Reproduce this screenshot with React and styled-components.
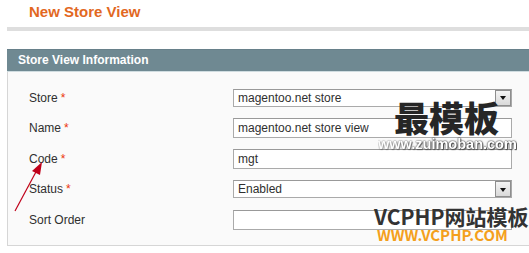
import React from 'react';
import styled, { createGlobalStyle } from 'styled-components';

const GlobalStyle = createGlobalStyle`
  body {
    margin: 0;
    overflow: hidden;
    background: #fff;
    font-family: "Liberation Sans", Arial, sans-serif;
  }
`;

const Page = styled.div`
  position: relative;
  width: 529px;
  height: 253px;
  padding-left: 7px;
  box-sizing: border-box;
  overflow: hidden;
`;

const ContentHeader = styled.div`
  width: 560px;
  padding: 3px 0 6px 22px;
  box-sizing: border-box;
  border-bottom: 4px solid #dedede;
`;

const Title = styled.h3`
  margin: 0;
  font-size: 15px;
  line-height: 18px;
  font-weight: bold;
  color: #e2681f;
`;

const Fieldset = styled.div`
  width: 560px;
  margin-top: 18px;
`;

const SectionHead = styled.h4`
  margin: 0;
  height: 23px;
  padding-left: 11px;
  background: #6f8992;
  border-top: 1px solid #67808a;
  border-bottom: 1px solid #cfdce0;
  box-sizing: border-box;
  color: #fff;
  font-size: 12px;
  font-weight: bold;
  line-height: 20px;
`;

const SectionBody = styled.div`
  background: #fafafa;
  border-left: 1px solid #d6d6d6;
  border-bottom: 1px solid #d6d6d6;
  padding: 10.5px 0 10px 21px;
`;

const Form = styled.div`
  display: grid;
  grid-template-columns: 204px 279px;
  grid-auto-rows: 30.5px;
  align-items: center;
`;

const Label = styled.label`
  font-size: 12px;
  color: #2f2f2f;
`;

const Required = styled.span`
  color: #eb340a;
  margin-left: 3px;
`;

const TextInput = styled.input`
  height: 20px;
  width: 100%;
  box-sizing: border-box;
  margin: 0;
  border: 1px solid #aaa;
  border-top-color: #999;
  padding: 0 4px;
  background: #fff;
  font: 12px "Liberation Sans", Arial, sans-serif;
  color: #2f2f2f;
  outline: none;
`;

const SelectBox = styled.div`
  display: flex;
  height: 18px;
  box-sizing: border-box;
  border: 1px solid #aaa;
  border-top-color: #999;
  background: #fff;
`;

const NativeSelect = styled.select`
  flex: 1;
  appearance: none;
  border: none;
  margin: 0;
  padding: 0 0 0 4px;
  background: transparent;
  font: 12px "Liberation Sans", Arial, sans-serif;
  color: #2f2f2f;
  outline: none;
`;

const ArrowButton = styled.span`
  width: 16px;
  height: 16px;
  box-sizing: border-box;
  border: 1px solid #8e8e8e;
  background: linear-gradient(#f4f4f4, #d9d9d9);
  display: flex;
  align-items: center;
  justify-content: center;
`;

const Triangle = styled.span`
  width: 0;
  height: 0;
  border-left: 3.5px solid transparent;
  border-right: 3.5px solid transparent;
  border-top: 4px solid #111;
  margin-top: 1px;
`;

/* watermarks stamped over the screenshot */
const Watermark = styled.div`
  position: absolute;
  left: ${(p) => p.$left}px;
  top: ${(p) => p.$top}px;
  display: flex;
  flex-direction: column;
  pointer-events: none;
  white-space: nowrap;
`;

const MarkCJK = styled.div`
  padding-left: 16px;
  font-family: "Noto Sans CJK SC", sans-serif;
  font-weight: 900;
  font-size: 35px;
  line-height: 38px;
  height: 39px;
  color: #262626;
`;

const MarkURL = styled.div`
  font-size: 14.5px;
  font-weight: bold;
  line-height: 14px;
  color: #fff;
  text-shadow: 0 0 2px #333, 1px 1px 1px #555, 0 0 1px #222;
  -webkit-mask-image: linear-gradient(90deg, rgba(0,0,0,0.45), #000 40%);
`;

const MarkBrand = styled.div`
  font-family: "Noto Sans CJK SC", sans-serif;
  font-weight: bold;
  font-size: 21px;
  line-height: 24px;
  color: #333;
`;

const MarkBrandURL = styled.div`
  padding-left: 3px;
  font-family: "Noto Sans CJK SC", sans-serif;
  font-weight: bold;
  font-size: 15px;
  line-height: 14px;
  color: #f4a01c;
`;

const Arrow = styled.svg`
  position: absolute;
  left: 0;
  top: 150px;
  pointer-events: none;
`;

const fields = [
  { label: 'Store', required: true, type: 'select', value: 'magentoo.net store' },
  { label: 'Name', required: true, type: 'text', value: 'magentoo.net store view' },
  { label: 'Code', required: true, type: 'text', value: 'mgt' },
  { label: 'Status', required: true, type: 'select', value: 'Enabled' },
  { label: 'Sort Order', required: false, type: 'text', value: '' },
];

const Field = ({ label, required, type, value }) => (
  <>
    <Label>
      {label}
      {required && <Required>*</Required>}
    </Label>
    {type === 'select' ? (
      <SelectBox>
        <NativeSelect defaultValue={value}>
          <option>{value}</option>
        </NativeSelect>
        <ArrowButton>
          <Triangle />
        </ArrowButton>
      </SelectBox>
    ) : (
      <TextInput defaultValue={value} />
    )}
  </>
);

export default function App() {
  return (
    <>
      <GlobalStyle />
      <Page>
        <ContentHeader>
          <Title>New Store View</Title>
        </ContentHeader>
        <Fieldset>
          <SectionHead>Store View Information</SectionHead>
          <SectionBody>
            <Form>
              {fields.map((f) => (
                <Field key={f.label} {...f} />
              ))}
            </Form>
          </SectionBody>
        </Fieldset>

        <Arrow width="50" height="65" viewBox="0 150 50 65">
          <line x1="15" y1="211" x2="37" y2="170" stroke="#c0001a" strokeWidth="1.2" />
          <polygon points="42,162 32,171 40,175" fill="#c0001a" />
        </Arrow>

        <Watermark $left={378} $top={98}>
          <MarkCJK>最模板</MarkCJK>
          <MarkURL>www.zuimoban.com</MarkURL>
        </Watermark>
        <Watermark $left={374} $top={204}>
          <MarkBrand>VCPHP网站模板</MarkBrand>
          <MarkBrandURL>WWW.VCPHP.COM</MarkBrandURL>
        </Watermark>
      </Page>
    </>
  );
}
